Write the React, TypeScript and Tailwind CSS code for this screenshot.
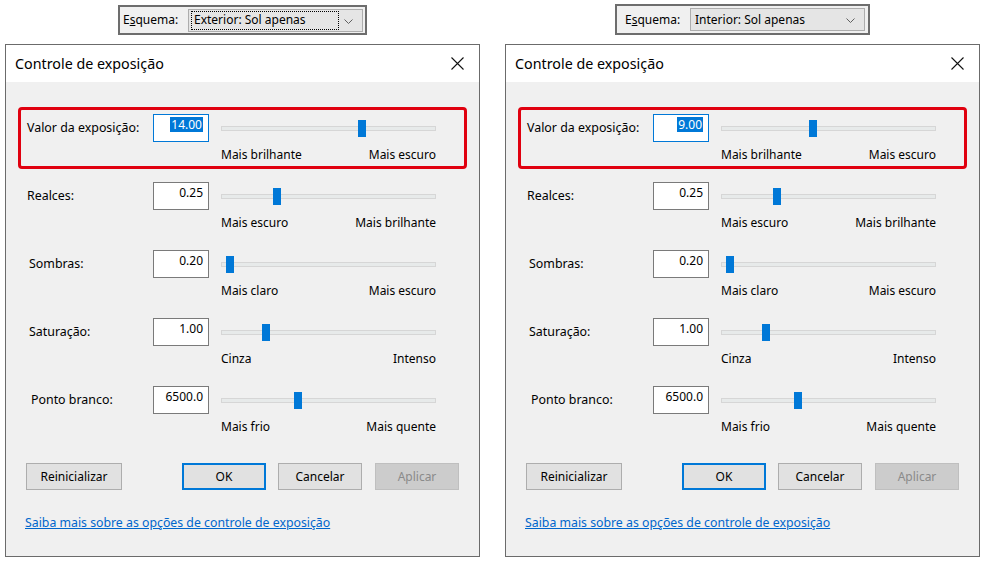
import React from 'react'

type Row = {
    label: string
    value: string
    thumb: number
    left: string
    right: string
    labelPad: string
}

const font = { fontFamily: '"Segoe UI", "Noto Sans", "Liberation Sans", sans-serif' }

function SchemeBar({ scheme, focus, padClass }: { scheme: string; focus: boolean; padClass: string }) {
    return (
        <div className={`flex items-center border-2 border-[#6d6d6d] bg-[#f0f0f0] ${padClass}`}>
            <span className="w-[65px] text-[12px] text-black">
                E<span className="underline">s</span>quema:
            </span>
            <div className="relative flex items-center w-[175px] h-[23px] bg-[#e5e5e5] border border-[#adadad]">
                {focus ? (
                    <div className="ml-[2px] w-[148px] h-[19px] flex items-center pl-[2px] border border-dotted border-black text-[12px] text-black">
                        {scheme}
                    </div>
                ) : (
                    <div className="ml-[3px] pl-[1px] text-[12px] text-black">{scheme}</div>
                )}
                <svg className="absolute right-[9px] top-[9px]" width="9" height="5" viewBox="0 0 9 5">
                    <polyline points="0.5,0.5 4.5,4.5 8.5,0.5" fill="none" stroke="#606060" strokeWidth="1" />
                </svg>
            </div>
        </div>
    )
}

function SliderRow({ row, highlight, focused }: { row: Row; highlight: boolean; focused: boolean }) {
    return (
        <div
            className={`flex items-start pt-[4px] pb-[3px] rounded-[4px] border-[3px] ${highlight ? 'border-[#e0000f]' : 'border-transparent'}`}
        >
            <div className={`w-[132px] h-[28px] flex items-center text-[12.4px] text-black ${row.labelPad}`}>{row.label}</div>
            <div
                className={`w-[56px] h-[28px] bg-white flex justify-end pt-[2px] pr-[5px] text-[12px] leading-[15px] ${focused ? 'border border-[#0078d7]' : 'border border-[#7a7a7a]'}`}
            >
                {focused ? (
                    <span className="bg-[#0078d7] text-white h-[15px] px-[1px]">{row.value}</span>
                ) : (
                    <span className="text-black">{row.value}</span>
                )}
            </div>
            <div className="ml-[12px] w-[215px]">
                <div className="relative h-[28px] flex items-center">
                    <div className="w-full h-[5px] bg-[#e7eaea] border border-[#d6d6d6]" />
                    <div
                        className="absolute top-[6px] w-[8px] h-[17px] bg-[#0078d7]"
                        style={{ left: row.thumb }}
                    />
                </div>
                <div className="mt-[5px] flex justify-between leading-4 text-[12px] text-black">
                    <span>{row.left}</span>
                    <span>{row.right}</span>
                </div>
            </div>
        </div>
    )
}

function ExposureDialog({ rows }: { rows: Row[] }) {
    return (
        <div className="w-[475px] h-[513px] border border-[#6b6b6b] bg-[#f0f0f0] flex flex-col">
            {/* Barra de título */}
            <div className="h-[37px] bg-white flex items-center justify-between pl-[9px] pr-[15px]">
                <span className="text-[14.3px] text-black">Controle de exposição</span>
                <svg width="13" height="13" viewBox="0 0 13 13">
                    <path d="M0.5 0.5 L12.5 12.5 M12.5 0.5 L0.5 12.5" stroke="#111" strokeWidth="1.1" fill="none" />
                </svg>
            </div>

            <div className="flex flex-col gap-[6px] pt-[25px] px-[12px]">
                {rows.map((row, i) => (
                    <SliderRow key={row.label} row={row} highlight={i === 0} focused={i === 0} />
                ))}
            </div>

            {/* Botões */}
            <div className="flex items-center mt-[22px] pl-[20px] text-[12px]">
                <button className="w-[96px] h-[27px] bg-[#e1e1e1] border border-[#adadad] text-black">Reinicializar</button>
                <button className="ml-[60px] w-[84px] h-[27px] bg-[#e1e1e1] border-2 border-[#0078d7] text-black">OK</button>
                <button className="ml-[12px] w-[84px] h-[27px] bg-[#e1e1e1] border border-[#adadad] text-black">Cancelar</button>
                <button className="ml-[13px] w-[84px] h-[27px] bg-[#cccccc] border border-[#bfbfbf] text-[#8a8a8a]">Aplicar</button>
            </div>

            <div className="mt-[24px] pl-[19px] text-[12.3px]">
                <span className="text-[#0066cc] underline">Saiba mais sobre as opções de controle de exposição</span>
            </div>
        </div>
    )
}

const baseRows = (valor: string, valorThumb: number): Row[] => [
    { label: 'Valor da exposição:', value: valor, thumb: valorThumb, left: 'Mais brilhante', right: 'Mais escuro', labelPad: 'pl-[6px]' },
    { label: 'Realces:', value: '0.25', thumb: 52, left: 'Mais escuro', right: 'Mais brilhante', labelPad: 'pl-[6px]' },
    { label: 'Sombras:', value: '0.20', thumb: 5, left: 'Mais claro', right: 'Mais escuro', labelPad: 'pl-[8px]' },
    { label: 'Saturação:', value: '1.00', thumb: 41, left: 'Cinza', right: 'Intenso', labelPad: 'pl-[8px]' },
    { label: 'Ponto branco:', value: '6500.0', thumb: 73, left: 'Mais frio', right: 'Mais quente', labelPad: 'pl-[10px]' },
]

export default function App() {
    return (
        <div className="w-[988px] h-[562px] bg-white flex gap-[25px] pl-[5px]" style={font}>
            <div className="flex flex-col items-center">
                <div className="mt-[5px] mb-[9px] h-[30px] flex">
                    <SchemeBar scheme="Exterior: Sol apenas" focus padClass="pl-[3px] pr-[2px]" />
                </div>
                <ExposureDialog rows={baseRows('14.00', 137)} />
            </div>
            <div className="flex flex-col items-center">
                <div className="mt-[4px] mb-[9px] h-[31px] flex">
                    <SchemeBar scheme="Interior: Sol apenas" focus={false} padClass="pl-[8px] pr-[3px]" />
                </div>
                <ExposureDialog rows={baseRows('9.00', 88)} />
            </div>
        </div>
    )
}
